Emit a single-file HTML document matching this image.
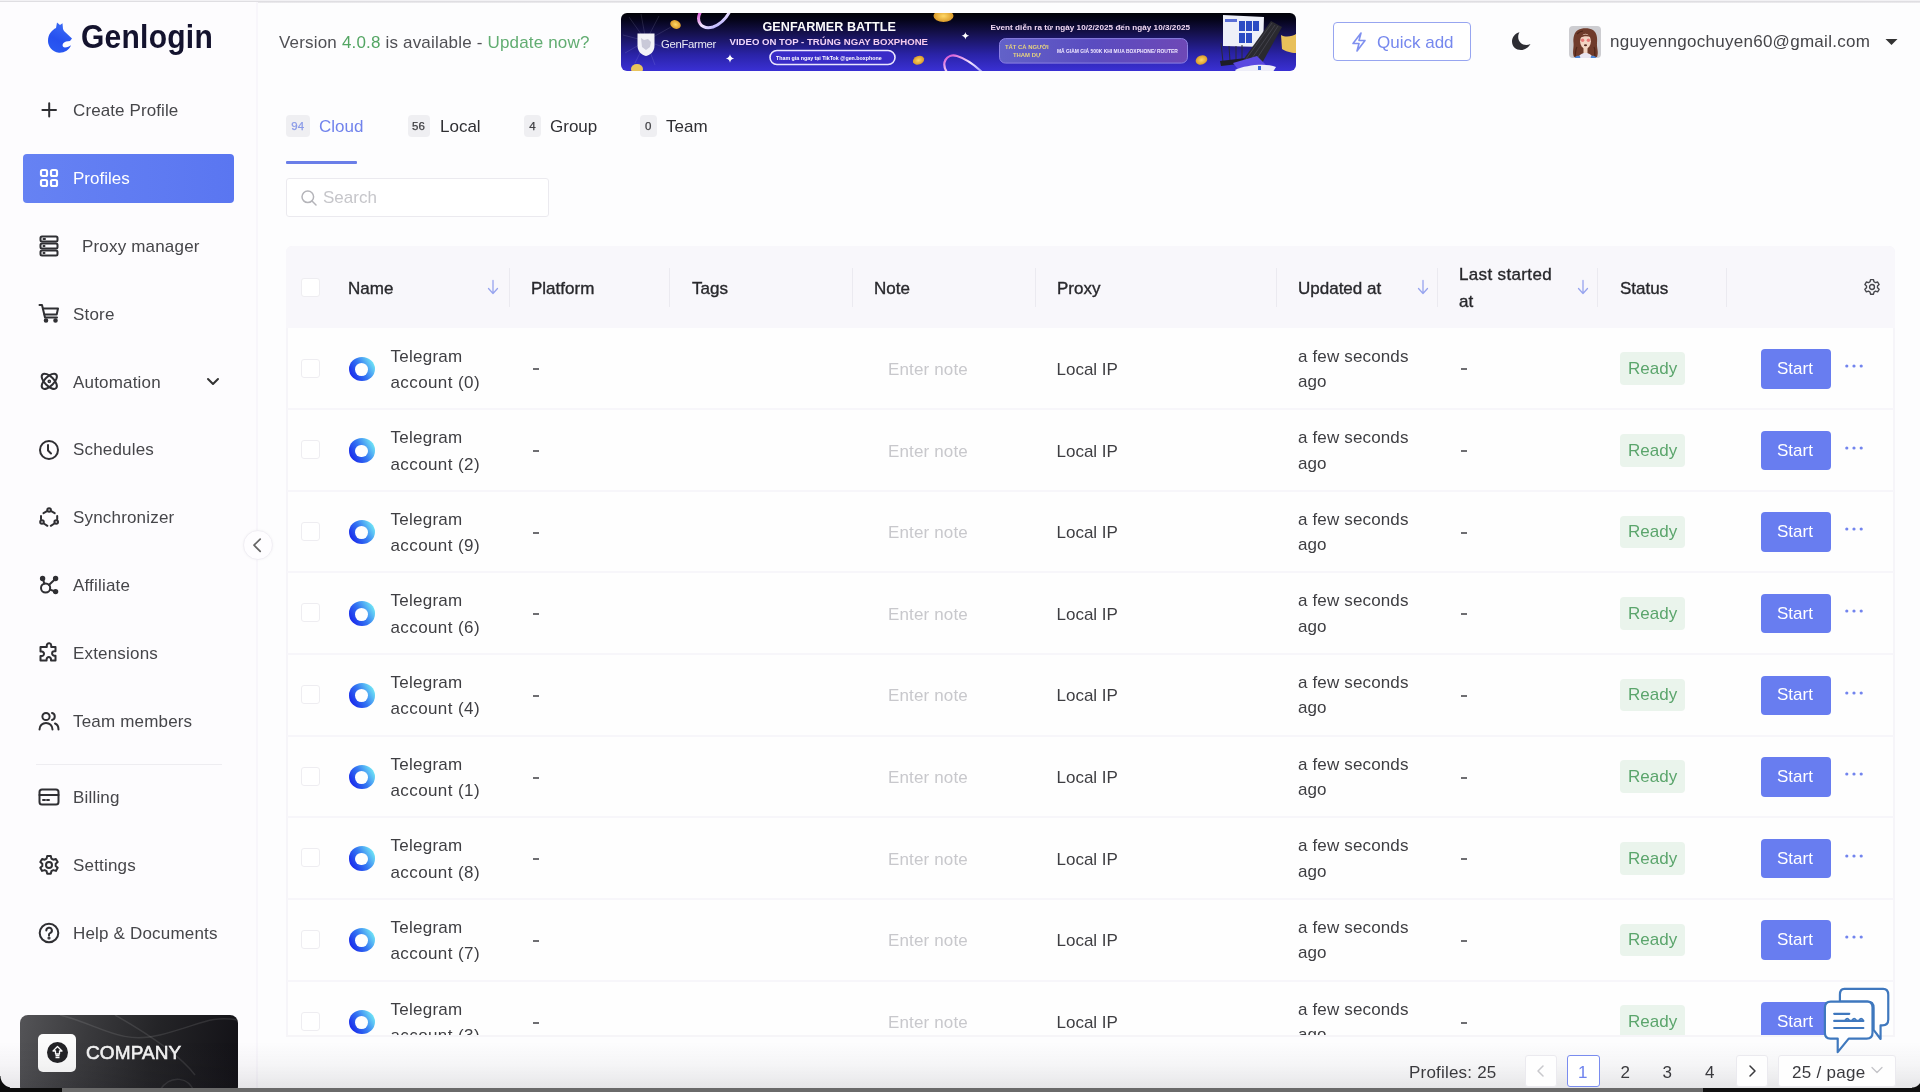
<!DOCTYPE html>
<html><head><meta charset="utf-8"><title>Genlogin</title>
<style>
html,body{margin:0;padding:0;}
body{width:1920px;height:1092px;position:relative;overflow:hidden;background:#fdfdfe;font-family:'Liberation Sans', sans-serif;}
.t{position:absolute;white-space:nowrap;font-family:'Liberation Sans', sans-serif;}
svg text{font-family:"Liberation Sans",sans-serif;}
</style></head><body>
<div style="position:absolute;left:0;top:0;width:1920px;height:1092px;overflow:hidden;will-change:transform">
<div style="position:absolute;left:0;top:0;width:1920px;height:3px;background:linear-gradient(180deg,#f2f1f4 0,#f2f1f4 0.8px,#dfdee2 1.2px,#dfdee2 2.2px,#fbfafc 3px)"></div><div style="position:absolute;left:0;top:2px;width:256px;height:1090px;background:#fdfcfe;border-right:2px solid #f8f6fb"></div><svg style="position:absolute;left:46px;top:21px" width="28" height="33" viewBox="0 0 28 33">
<defs><linearGradient id="fox" x1="0.7" y1="0" x2="0.3" y2="1"><stop offset="0" stop-color="#3d6ef6"/><stop offset="0.6" stop-color="#2650ef"/><stop offset="1" stop-color="#2a5af2"/></linearGradient></defs>
<path fill="url(#fox)" d="M11 1.5 L14 4 L16.5 2.3 L17 8 L18 10 L26 17.5 L24 20 L20 20.5 C15.5 22 15.8 26.5 19 26.5 C21.5 26.5 23.5 25.5 25 24.3 C23.5 29 18 32 13 31.7 C6 31 2 25 2 20 C2 13 6 9 10 7 Z"/>
</svg><div class="t" style="left:81px;top:20.3px;font-size:30px;line-height:36.0px;color:#14132e;font-weight:700;transform:scaleY(1.1);transform-origin:0 80%;letter-spacing:0.25px">Genlogin</div><div style="position:absolute;left:39px;top:100px;line-height:0"><svg width="20" height="20" viewBox="0 0 20 20" fill="none" stroke="#2f2f33" stroke-width="2" stroke-linecap="round" stroke-linejoin="round"><path d="M10.2 3.3v13.1M3.4 9.9h13.6"/></svg></div><div class="t" style="left:73px;top:101.21px;font-size:17px;line-height:20.4px;color:#46464a;font-weight:400;letter-spacing:0.1px">Create Profile</div><div style="position:absolute;left:23px;top:153.5px;width:211px;height:49px;border-radius:4px;background:linear-gradient(90deg,#6682f3,#5a76f1)"></div><div style="position:absolute;left:39px;top:168px;line-height:0"><svg width="20" height="20" viewBox="0 0 20 20" fill="none" stroke="#fff" stroke-width="2.2"><rect x="2" y="2" width="6" height="6" rx="1.5"/><rect x="12" y="2" width="6" height="6" rx="1.5"/><rect x="2" y="12" width="6" height="6" rx="1.5"/><rect x="12" y="12" width="6" height="6" rx="1.5"/></svg></div><div class="t" style="left:73px;top:168.91px;font-size:17px;line-height:20.4px;color:#ffffff;font-weight:400;">Profiles</div><div style="position:absolute;left:39px;top:235px;line-height:0"><svg width="20" height="22" viewBox="0 0 20 22" fill="none" stroke="#2f2f33" stroke-width="2" stroke-linecap="round" stroke-linejoin="round"><rect x="1.5" y="1.5" width="17" height="5" rx="1.5"/><rect x="1.5" y="8.5" width="17" height="5" rx="1.5"/><rect x="1.5" y="15.5" width="17" height="5" rx="1.5"/><path d="M4.5 4h1.5M4.5 11h1M4.5 18h1"/></svg></div><div class="t" style="left:82px;top:237.21px;font-size:17px;line-height:20.4px;color:#46464a;font-weight:400;letter-spacing:0.18px">Proxy manager</div><div style="position:absolute;left:38px;top:303px;line-height:0"><svg width="22" height="20" viewBox="0 0 22 20" fill="none" stroke="#2f2f33" stroke-width="2" stroke-linecap="round" stroke-linejoin="round"><path d="M1.5 2h2.5l3 12.5h12"/><path d="M5 5.5h15l-1.3 6H6.5"/><circle cx="8" cy="17.5" r="1.3" fill="#2f2f33"/><circle cx="17.5" cy="17.5" r="1.3" fill="#2f2f33"/></svg></div><div class="t" style="left:73px;top:304.91px;font-size:17px;line-height:20.4px;color:#46464a;font-weight:400;letter-spacing:0.18px">Store</div><div style="position:absolute;left:39px;top:371px;line-height:0"><svg width="20" height="20" viewBox="0 0 20 20" fill="none" stroke="#2f2f33" stroke-width="2" stroke-linecap="round" stroke-linejoin="round"><ellipse cx="10.3" cy="10.3" rx="9.7" ry="4.6" transform="rotate(45 10.3 10.3)"/><ellipse cx="10.3" cy="10.3" rx="9.7" ry="4.6" transform="rotate(-45 10.3 10.3)"/><circle cx="10.3" cy="10.3" r="1.1" stroke-width="1.5"/></svg></div><div class="t" style="left:73px;top:372.51px;font-size:17px;line-height:20.4px;color:#46464a;font-weight:400;letter-spacing:0.18px">Automation</div><div style="position:absolute;left:38px;top:438.5px;line-height:0"><svg width="22" height="22" viewBox="0 0 22 22" fill="none" stroke="#2f2f33" stroke-width="2" stroke-linecap="round" stroke-linejoin="round"><circle cx="11" cy="11" r="9"/><path d="M10 6v5.5l3 3"/></svg></div><div class="t" style="left:73px;top:440.41px;font-size:17px;line-height:20.4px;color:#46464a;font-weight:400;letter-spacing:0.18px">Schedules</div><div style="position:absolute;left:38px;top:506px;line-height:0"><svg width="22" height="22" viewBox="0 0 22 22" fill="none" stroke="#2f2f33" stroke-width="2" stroke-linecap="round" stroke-linejoin="round"><circle cx="11.1" cy="4" r="1.8"/><circle cx="4" cy="16" r="1.8"/><circle cx="18.2" cy="16" r="1.8"/><path d="M9 5.2L5.5 7.2M13.2 5.2L16.7 7.2M3 10v3.2M19.2 10v3.2M5.8 17.5l3.6 2.3M16.4 17.5l-3.6 2.3"/></svg></div><div class="t" style="left:73px;top:508.41px;font-size:17px;line-height:20.4px;color:#46464a;font-weight:400;letter-spacing:0.18px">Synchronizer</div><div style="position:absolute;left:38px;top:574px;line-height:0"><svg width="22" height="22" viewBox="0 0 22 22" fill="none" stroke="#2f2f33" stroke-width="2" stroke-linecap="round" stroke-linejoin="round"><circle cx="7.6" cy="14" r="4.6"/><circle cx="4.6" cy="4.5" r="1.7" fill="#2f2f33"/><circle cx="17.6" cy="4.5" r="1.7" fill="#2f2f33"/><circle cx="17.6" cy="17.6" r="1.7" fill="#2f2f33"/><path d="M5.3 6.3L6.3 9.5M16.2 5.9L10.9 10.9M12 15.6L15.9 17"/></svg></div><div class="t" style="left:73px;top:576.41px;font-size:17px;line-height:20.4px;color:#46464a;font-weight:400;letter-spacing:0.18px">Affiliate</div><div style="position:absolute;left:38px;top:642px;line-height:0"><svg width="22" height="22" viewBox="0 0 22 22" fill="none" stroke="#2f2f33" stroke-width="2" stroke-linecap="round" stroke-linejoin="round"><path d="M9 2.5a2.2 2.2 0 0 1 4.2 .8V5h4.3v4.3h-1.2a2.2 2.2 0 1 0 0 4.4h1.2v4.8H13v-1.2a2.2 2.2 0 1 0-4.4 0v1.2H2.5V14h1.3a2.2 2.2 0 1 0 0-4.4H2.5V5h6.3V3.3z"/></svg></div><div class="t" style="left:73px;top:644.41px;font-size:17px;line-height:20.4px;color:#46464a;font-weight:400;letter-spacing:0.18px">Extensions</div><div style="position:absolute;left:38px;top:710px;line-height:0"><svg width="22" height="22" viewBox="0 0 22 22" fill="none" stroke="#2f2f33" stroke-width="2" stroke-linecap="round" stroke-linejoin="round"><circle cx="8" cy="6.5" r="3.6"/><path d="M1.5 19.5c0-3.8 2.9-6.5 6.5-6.5s6.5 2.7 6.5 6.5"/><path d="M14 3a3.6 3.6 0 0 1 0 7"/><path d="M17 13.5c2.2.9 3.5 3 3.5 6"/></svg></div><div class="t" style="left:73px;top:711.91px;font-size:17px;line-height:20.4px;color:#46464a;font-weight:400;letter-spacing:0.18px">Team members</div><div style="position:absolute;left:38px;top:787px;line-height:0"><svg width="22" height="20" viewBox="0 0 22 20" fill="none" stroke="#2f2f33" stroke-width="2" stroke-linecap="round" stroke-linejoin="round"><rect x="1.5" y="2.5" width="19" height="15" rx="2.5"/><path d="M1.5 8h19M5 13h2M9 13h2"/></svg></div><div class="t" style="left:73px;top:788.41px;font-size:17px;line-height:20.4px;color:#46464a;font-weight:400;letter-spacing:0.18px">Billing</div><div style="position:absolute;left:38px;top:854px;line-height:0"><svg width="22" height="22" viewBox="0 0 22 22" fill="none" stroke="#2f2f33" stroke-width="2" stroke-linecap="round" stroke-linejoin="round"><path d="M9.2 2h3.6l.6 2.6 1.9 1.1 2.6-.8 1.8 3.1-2 1.8v2.2l2 1.8-1.8 3.1-2.6-.8-1.9 1.1-.6 2.6H9.2l-.6-2.6-1.9-1.1-2.6.8-1.8-3.1 2-1.8V9.8l-2-1.8 1.8-3.1 2.6.8 1.9-1.1z"/><circle cx="11" cy="11" r="3"/></svg></div><div class="t" style="left:73px;top:856.41px;font-size:17px;line-height:20.4px;color:#46464a;font-weight:400;letter-spacing:0.18px">Settings</div><div style="position:absolute;left:38px;top:922px;line-height:0"><svg width="22" height="22" viewBox="0 0 22 22" fill="none" stroke="#2f2f33" stroke-width="2" stroke-linecap="round" stroke-linejoin="round"><circle cx="11" cy="11" r="9.3"/><path d="M8.3 8.5a2.8 2.8 0 1 1 3.8 2.6c-.7.3-1.1.9-1.1 1.6v.8"/><circle cx="11" cy="16" r=".6" fill="#2f2f33"/></svg></div><div class="t" style="left:73px;top:924.21px;font-size:17px;line-height:20.4px;color:#46464a;font-weight:400;letter-spacing:0.18px">Help &amp; Documents</div><svg style="position:absolute;left:205px;top:375px" width="16" height="14" viewBox="0 0 16 14" fill="none" stroke="#333" stroke-width="2" stroke-linecap="round" stroke-linejoin="round"><path d="M3 4l5 5 5-5"/></svg><div style="position:absolute;left:36px;top:764px;width:186px;height:1px;background:#eeedf1"></div><div style="position:absolute;left:242.5px;top:529.7px;width:30px;height:30px;box-sizing:border-box;border-radius:50%;background:#fefdff;border:1.5px solid #f0eef4;box-shadow:0 0 3px rgba(0,0,0,0.04)"></div><svg style="position:absolute;left:250px;top:538px" width="14" height="15" viewBox="0 0 14 15" fill="none" stroke="#666" stroke-width="1.7" stroke-linecap="round" stroke-linejoin="round"><path d="M10.2 1.2L4 7.2 10.2 13.4"/></svg><div style="position:absolute;left:20px;top:1015px;width:218px;height:80px;border-radius:8px;background:linear-gradient(100deg,#545457 0%,#3a3a3d 30%,#242427 60%,#121116 100%);overflow:hidden">
<svg width="218" height="80" style="position:absolute;left:0;top:0" fill="none" stroke="rgba(255,255,255,0.10)" stroke-width="1.5"><path d="M40 0 C80 10 100 30 140 20 S190 0 218 5"/><path d="M95 0 C130 20 160 40 175 60"/><path d="M140 75 C150 60 170 60 175 80"/></svg>
</div><div style="position:absolute;left:38px;top:1033.5px;width:38px;height:38px;border-radius:5px;background:#fbfbfb"></div><div style="position:absolute;left:46.5px;top:1042px;width:21px;height:21px;border-radius:50%;background:#232326"></div><svg style="position:absolute;left:46.5px;top:1042px" width="21" height="21" viewBox="0 0 21 21" fill="none" stroke="#fff" stroke-width="1.3" stroke-linejoin="round"><path d="M10.5 4.5 L15 9 H12.5 V12 H8.5 V9 H6 Z"/><path d="M8.5 13.5h4M8.5 15.5h4"/></svg><div class="t" style="left:86px;top:1042.22px;font-size:19px;line-height:22.8px;color:#f4f4f4;font-weight:400;-webkit-text-stroke:0.6px #f4f4f4;letter-spacing:0.1px">COMPANY</div><div class="t" style="left:279px;top:32.71px;font-size:17px;line-height:20.4px;color:#505055;font-weight:400;letter-spacing:0.18px">Version <span style="color:#53a563">4.0.8</span> is available - <span style="color:#62ad72">Update now?</span></div><div style="position:absolute;left:620.5px;top:12.5px;width:675px;height:58.5px;border-radius:6px;overflow:hidden;background:linear-gradient(180deg,#020207 0%,#05041a 12%,#15114e 35%,#2a23a8 72%,#3a30d4 100%)">
<svg width="675" height="59" viewBox="0 0 675 59" style="position:absolute;left:0;top:0">
 <defs><linearGradient id="ring" x1="0" x2="1" y1="0" y2="1"><stop offset="0" stop-color="#d64bd0"/><stop offset="0.5" stop-color="#f4e6ff"/><stop offset="1" stop-color="#8a8cff"/></linearGradient>
 <linearGradient id="pill" x1="0" x2="1"><stop offset="0" stop-color="#6262c8"/><stop offset="0.5" stop-color="#5a4cc0"/><stop offset="1" stop-color="#6e48b6"/></linearGradient>
 <linearGradient id="txt2" x1="0" x2="1"><stop offset="0" stop-color="#f0d8ff"/><stop offset="1" stop-color="#f4c8ea"/></linearGradient>
 <radialGradient id="coin"><stop offset="0" stop-color="#ffd866"/><stop offset="1" stop-color="#d99a2a"/></radialGradient></defs>
 <g stroke="rgba(220,220,255,0.22)" stroke-width="0.6">
  <path d="M25 28 L8 4M25 28 L20 1M25 28 L38 3M25 28 L50 14M25 28 L2 22M25 28 L4 40M25 28 L48 36M25 28 L14 50M25 28 L34 52"/>
 </g>
 <ellipse cx="54.5" cy="11.5" rx="5.5" ry="4.2" fill="url(#coin)" transform="rotate(25 54.5 11.5)"/>
 <path d="M80 -2 C74 8 80 17 92 14 C100 11 106 4 109 -2" fill="none" stroke="url(#ring)" stroke-width="3"/>
 <path d="M16.5 20.5 h17 v12 c0 6 -4 9.5 -8.5 10.5 c-4.5 -1 -8.5 -4.5 -8.5 -10.5z" fill="#f3f3f8"/>
 <path d="M20 25 l3 2 l4 -1 l3 3 l-1 5 l-4 3 l-4 -3z" fill="#c9c9d8"/>
 <text x="40" y="35" font-size="11.3" letter-spacing="-0.3" fill="#e8e8f4">GenFarmer</text>
 <ellipse cx="16" cy="56" rx="6" ry="5" fill="#e9c45c"/>
 <text x="141.5" y="18" font-weight="700" font-size="12.6" letter-spacing="0.05" fill="#fafafa">GENFARMER BATTLE</text>
 <text x="108.5" y="32" font-weight="700" font-size="9.6" letter-spacing="0" fill="url(#txt2)">VIDEO ON TOP - TRÚNG NGAY BOXPHONE</text>
 <rect x="149" y="37.5" width="125" height="14" rx="7" fill="#3a2cc8" stroke="#ebe6ff" stroke-width="1.6"/>
 <text x="155" y="47.3" font-weight="700" font-size="5.3" fill="#ffffff">Tham gia ngay tại TikTok @gen.boxphone</text>
 <path d="M109 41.3 Q109.63 44.87 113.2 45.5 Q109.63 46.13 109 49.7 Q108.37 46.13 104.8 45.5 Q108.37 44.87 109 41.3Z" fill="#fff"/>
 <ellipse cx="322.5" cy="3" rx="10" ry="6" fill="url(#coin)"/>
 <ellipse cx="297.5" cy="47.3" rx="5.8" ry="4.2" fill="url(#coin)" transform="rotate(-20 297.5 47.3)"/>
 <path d="M344.4 18.9 Q344.96999999999997 22.13 348.2 22.7 Q344.96999999999997 23.27 344.4 26.5 Q343.83 23.27 340.59999999999997 22.7 Q343.83 22.13 344.4 18.9Z" fill="#fff"/>
 <path d="M328 62 C318 50 326 40 336 43 C346 46 356 54 364 62" fill="none" stroke="url(#ring)" stroke-width="2.2"/>
 <text x="369.5" y="17.2" font-weight="700" font-size="8.1" letter-spacing="0.05" fill="#f0d8f2">Event diễn ra từ ngày 10/2/2025 đến ngày 10/3/2025</text>
 <rect x="378.5" y="25.6" width="188" height="24.5" rx="6" fill="url(#pill)" stroke="#8c80e2" stroke-width="1"/>
 <text x="384" y="36" font-weight="700" font-size="5.9" fill="#e8d57e">TẤT CẢ NGƯỜI</text>
 <text x="392" y="43.5" font-weight="700" font-size="5.9" fill="#e8d57e">THAM DỰ</text>
 <text x="436" y="40" font-weight="700" font-size="4.95" fill="#f0e8ff">MÃ GIẢM GIÁ 500K KHI MUA BOXPHONE/ ROUTER</text>
 <ellipse cx="580.5" cy="47" rx="6" ry="4.5" fill="url(#coin)" transform="rotate(-20 580.5 47)"/>
 <path d="M602 2 L643 4 L642 34 L602 33 Z" fill="#eef0f8"/>
 <rect x="604" y="6" width="12" height="3" fill="#5b6fd6"/>
 <g fill="#2c4cc4"><rect x="618" y="8" width="6" height="10"/><rect x="625" y="8" width="6" height="10"/><rect x="632" y="8" width="6" height="10"/><rect x="618" y="20" width="6" height="10"/><rect x="625" y="20" width="6" height="10"/></g>
 <path d="M600 30 L602 49 M608 33 L609 48 M615 33 L615 47 M621 32 L621 46" stroke="#2a2a36" stroke-width="1"/>
 <path d="M599 48 L625 45 L626 50 L600 53 Z" fill="#1d1d26"/>
 <path d="M622 47 L650 8 L661 14 L640 52 Z" fill="#2a2a2f"/>
 <path d="M625 46 L651 10M629 48 L654 12M633 50 L657 13" stroke="#5a5a66" stroke-width="0.5"/>
 <path d="M612 50 L636 43 L645 52 L620 60 Z" fill="#5a48e0"/>
 <path d="M614 57 C625 52 645 50 655 54 L650 62 L618 62 Z" fill="#eeeef8"/>
 <rect x="637" y="53" width="3" height="4" fill="#3a66d8"/>
 <path d="M660 22 C665 25 672 23 675 21 L675 40 C670 40 664 38 661 36 Z" fill="#e8c05a"/>
</svg></div><div style="position:absolute;left:1332.5px;top:21.5px;width:136px;height:37px;border:1.5px solid #97a5f0;border-radius:4px;background:#fff"></div><svg style="position:absolute;left:1350px;top:31px" width="18" height="22" viewBox="0 0 18 22" fill="none" stroke="#7f90ef" stroke-width="1.6" stroke-linejoin="round"><path d="M11 2 L3 12.5 H9 L7 20 L15 9.5 H9 Z"/></svg><div class="t" style="left:1377px;top:32.71px;font-size:17px;line-height:20.4px;color:#7688ee;font-weight:400;">Quick add</div><svg style="position:absolute;left:1509.5px;top:29.5px" width="24" height="22" viewBox="0 0 24 22"><path fill="#2d2d33" d="M9.5 2.2 C5 3.2 2 7.2 2 11.5 C2 16.5 6 20 11 20 C15 20 18.3 17.5 20.5 14 C19 14.7 17.8 15 16.3 15 C11.8 15 8.2 11.5 8.2 7 C8.2 5.2 8.6 3.5 9.5 2.2 Z"/></svg><div style="position:absolute;left:1568.5px;top:25.5px;width:32.5px;height:32.5px;border-radius:4px;background:#cdcdd1;overflow:hidden">
<svg width="33" height="33" viewBox="0 0 33 33">
<path d="M5 31 C3 26 5 22 4.5 17 C4 12 5 6 9 4 C13 1.5 20 1.5 24 4 C28 7 28.5 12 28 17 C27.5 22 30 26 28 31 Z" fill="#6f3b2b"/>
<path d="M6 30 C7 27 6 24 8 21 M26 30 C25 27 27 24 25 21 M8 8 C10 6 12 5 14 5" stroke="#4e2619" stroke-width="1.2" fill="none"/>
<path d="M14.5 22 h4 v6 h-4z" fill="#f1d3c2"/>
<path d="M9 33 C9.5 29 13 27 16.5 27 C20 27 23.5 29 24 33z" fill="#e9e6f2"/>
<path d="M5 33 C6 30 9 29.5 11 30 L11.5 33z M28 33 C27 30 24 29.5 22 30 L21.5 33z" fill="#4f87d6"/>
<ellipse cx="16.5" cy="15.2" rx="5.4" ry="7.4" fill="#f3d4c3"/>
<path d="M11 11 C12 7.5 21 7.5 22 11 C19 9.8 14 9.8 11 12z" fill="#6f3b2b"/>
<circle cx="13.6" cy="14.2" r="1.7" fill="#e97a78"/><circle cx="19.4" cy="14.2" r="1.7" fill="#e97a78"/>
<ellipse cx="16.5" cy="19.2" rx="1.6" ry="1" fill="#5a3026"/>
</svg></div><div class="t" style="left:1610px;top:32.41px;font-size:17px;line-height:20.4px;color:#454549;font-weight:400;letter-spacing:0.28px">nguyenngochuyen60@gmail.com</div><svg style="position:absolute;left:1885px;top:38px" width="13" height="8" viewBox="0 0 13 8"><path d="M0.5 1 H12.5 L6.5 7 Z" fill="#333"/></svg><div style="position:absolute;left:286px;top:114.5px;width:23.5px;height:22px;border-radius:4px;background:#efeff2;color:#8b9be8;font-family:'Liberation Sans', sans-serif;font-size:11.5px;line-height:22px;text-align:center;-webkit-text-stroke:0.25px #8b9be8">94</div><div class="t" style="left:319px;top:116.61px;font-size:17px;line-height:20.4px;color:#7183ec;font-weight:400;">Cloud</div><div style="position:absolute;left:407.5px;top:114.5px;width:22px;height:22px;border-radius:4px;background:#efeff2;color:#404044;font-family:'Liberation Sans', sans-serif;font-size:11.5px;line-height:22px;text-align:center;-webkit-text-stroke:0.25px #404044">56</div><div class="t" style="left:440px;top:116.61px;font-size:17px;line-height:20.4px;color:#2f2f33;font-weight:400;">Local</div><div style="position:absolute;left:524px;top:114.5px;width:17px;height:22px;border-radius:4px;background:#efeff2;color:#404044;font-family:'Liberation Sans', sans-serif;font-size:11.5px;line-height:22px;text-align:center;-webkit-text-stroke:0.25px #404044">4</div><div class="t" style="left:550px;top:116.61px;font-size:17px;line-height:20.4px;color:#2f2f33;font-weight:400;">Group</div><div style="position:absolute;left:640px;top:114.5px;width:16.5px;height:22px;border-radius:4px;background:#efeff2;color:#404044;font-family:'Liberation Sans', sans-serif;font-size:11.5px;line-height:22px;text-align:center;-webkit-text-stroke:0.25px #404044">0</div><div class="t" style="left:666px;top:116.61px;font-size:17px;line-height:20.4px;color:#2f2f33;font-weight:400;">Team</div><div style="position:absolute;left:286px;top:160.5px;width:71px;height:3px;border-radius:1px;background:#6a7ee8"></div><div style="position:absolute;left:286px;top:178px;width:261px;height:37px;border:1px solid #ebeaef;border-radius:3px;background:#fff"></div><svg style="position:absolute;left:300px;top:189px" width="18" height="18" viewBox="0 0 18 18" fill="none" stroke="#b4b4b9" stroke-width="1.5" stroke-linecap="round"><circle cx="7.8" cy="7.8" r="5.8"/><path d="M12 12l4 4"/></svg><div class="t" style="left:323px;top:188.41px;font-size:17px;line-height:20.4px;color:#c6c6ca;font-weight:400;">Search</div><div style="position:absolute;left:286px;top:246px;width:1609px;height:791px;background:#fefefe;border:2px solid #f6f5f9;border-bottom:none;border-radius:6px 6px 0 0;box-sizing:border-box"></div><div style="position:absolute;left:286px;top:246px;width:1609px;height:81.5px;background:#f8f7fb;border-radius:6px 6px 0 0"></div><div style="position:absolute;left:301px;top:278px;width:17px;height:17px;border:1px solid #eeedf1;border-radius:3px;background:#fff"></div><div class="t" style="left:348px;top:278.51px;font-size:17px;line-height:20.4px;color:#28282c;font-weight:400;-webkit-text-stroke:0.35px #28282c">Name</div><div class="t" style="left:531px;top:278.51px;font-size:17px;line-height:20.4px;color:#28282c;font-weight:400;-webkit-text-stroke:0.35px #28282c">Platform</div><div class="t" style="left:692px;top:278.51px;font-size:17px;line-height:20.4px;color:#28282c;font-weight:400;-webkit-text-stroke:0.35px #28282c">Tags</div><div class="t" style="left:874px;top:278.51px;font-size:17px;line-height:20.4px;color:#28282c;font-weight:400;-webkit-text-stroke:0.35px #28282c">Note</div><div class="t" style="left:1057px;top:278.51px;font-size:17px;line-height:20.4px;color:#28282c;font-weight:400;-webkit-text-stroke:0.35px #28282c">Proxy</div><div class="t" style="left:1298px;top:278.51px;font-size:17px;line-height:20.4px;color:#28282c;font-weight:400;-webkit-text-stroke:0.35px #28282c">Updated at</div><div class="t" style="left:1459px;top:265.41px;font-size:17px;line-height:20.4px;color:#28282c;font-weight:400;-webkit-text-stroke:0.35px #28282c;letter-spacing:0.35px">Last started</div><div class="t" style="left:1459px;top:291.91px;font-size:17px;line-height:20.4px;color:#28282c;font-weight:400;-webkit-text-stroke:0.35px #28282c">at</div><div class="t" style="left:1620px;top:278.51px;font-size:17px;line-height:20.4px;color:#28282c;font-weight:400;-webkit-text-stroke:0.35px #28282c">Status</div><div style="position:absolute;left:508.5px;top:268px;width:1px;height:39px;background:#ebeaf0"></div><div style="position:absolute;left:669px;top:268px;width:1px;height:39px;background:#ebeaf0"></div><div style="position:absolute;left:851.5px;top:268px;width:1px;height:39px;background:#ebeaf0"></div><div style="position:absolute;left:1035px;top:268px;width:1px;height:39px;background:#ebeaf0"></div><div style="position:absolute;left:1276px;top:268px;width:1px;height:39px;background:#ebeaf0"></div><div style="position:absolute;left:1436.5px;top:268px;width:1px;height:39px;background:#ebeaf0"></div><div style="position:absolute;left:1597px;top:268px;width:1px;height:39px;background:#ebeaf0"></div><div style="position:absolute;left:1726px;top:268px;width:1px;height:39px;background:#ebeaf0"></div><svg style="position:absolute;left:486px;top:279px" width="14" height="16" viewBox="0 0 14 16" fill="none" stroke="#97a4ef" stroke-width="1.3" stroke-linecap="round" stroke-linejoin="round"><path d="M7 1.5v13M2.5 9.5l4.5 5 4.5-5"/></svg><svg style="position:absolute;left:1415.5px;top:279px" width="14" height="16" viewBox="0 0 14 16" fill="none" stroke="#97a4ef" stroke-width="1.3" stroke-linecap="round" stroke-linejoin="round"><path d="M7 1.5v13M2.5 9.5l4.5 5 4.5-5"/></svg><svg style="position:absolute;left:1576px;top:279px" width="14" height="16" viewBox="0 0 14 16" fill="none" stroke="#97a4ef" stroke-width="1.3" stroke-linecap="round" stroke-linejoin="round"><path d="M7 1.5v13M2.5 9.5l4.5 5 4.5-5"/></svg><svg style="position:absolute;left:1863px;top:278px" width="18" height="18" viewBox="0 0 22 22" fill="none" stroke="#46464b" stroke-width="1.7" stroke-linejoin="round"><path d="M9.2 2h3.6l.6 2.6 1.9 1.1 2.6-.8 1.8 3.1-2 1.8v2.2l2 1.8-1.8 3.1-2.6-.8-1.9 1.1-.6 2.6H9.2l-.6-2.6-1.9-1.1-2.6.8-1.8-3.1 2-1.8V9.8l-2-1.8 1.8-3.1 2.6.8 1.9-1.1z"/><circle cx="11" cy="11" r="3"/></svg><div style="position:absolute;left:0;top:0;width:1920px;height:1035px;overflow:hidden"><div style="position:absolute;left:301px;top:358.5px;width:17px;height:17px;border:1px solid #eeedf1;border-radius:3px;background:#fff"></div><div style="position:absolute;left:348.5px;top:356.50px;width:26.5px;height:24.5px;border-radius:50%;background:linear-gradient(60deg,#1b2fec 15%,#3578f2 50%,#72eaf6 90%)"></div><div style="position:absolute;left:354.9px;top:362.90px;width:13px;height:12.8px;border-radius:50%;background:#fefefe"></div><div class="t" style="left:390.5px;top:346.61px;font-size:17px;line-height:20.4px;color:#3e3e42;font-weight:400;letter-spacing:0.25px">Telegram</div><div class="t" style="left:390.5px;top:372.91px;font-size:17px;line-height:20.4px;color:#3e3e42;font-weight:400;letter-spacing:0.4px">account (0)</div><div style="position:absolute;left:533px;top:368px;width:6px;height:1.6px;background:#6e6e72"></div><div class="t" style="left:888px;top:359.91px;font-size:17px;line-height:20.4px;color:#c8c8cc;font-weight:400;letter-spacing:0.15px">Enter note</div><div class="t" style="left:1056.5px;top:359.91px;font-size:17px;line-height:20.4px;color:#3e3e42;font-weight:400;">Local IP</div><div class="t" style="left:1298px;top:346.61px;font-size:17px;line-height:20.4px;color:#3e3e42;font-weight:400;letter-spacing:0.15px">a few seconds</div><div class="t" style="left:1298px;top:371.91px;font-size:17px;line-height:20.4px;color:#3e3e42;font-weight:400;">ago</div><div style="position:absolute;left:1461px;top:368px;width:6px;height:1.6px;background:#6e6e72"></div><div style="position:absolute;left:1620px;top:352.30px;width:65px;height:32.7px;border-radius:4px;background:#eaf4ec"></div><div class="t" style="left:1628px;top:358.91px;font-size:17px;line-height:20.4px;color:#5ba56c;font-weight:400;">Ready</div><div style="position:absolute;left:1761px;top:349.00px;width:70px;height:39.5px;border-radius:4px;background:#687df0"></div><div class="t" style="left:1777px;top:358.91px;font-size:17px;line-height:20.4px;color:#ffffff;font-weight:400;">Start</div><svg style="position:absolute;left:1844px;top:363.00px" width="20" height="6" viewBox="0 0 20 6" fill="#7284ee"><circle cx="2.8" cy="3" r="1.6"/><circle cx="10" cy="3" r="1.6"/><circle cx="17.2" cy="3" r="1.6"/></svg><div style="position:absolute;left:287px;top:408.12px;width:1607px;height:2px;background:#f7f6fa"></div><div style="position:absolute;left:301px;top:440.12px;width:17px;height:17px;border:1px solid #eeedf1;border-radius:3px;background:#fff"></div><div style="position:absolute;left:348.5px;top:438.12px;width:26.5px;height:24.5px;border-radius:50%;background:linear-gradient(60deg,#1b2fec 15%,#3578f2 50%,#72eaf6 90%)"></div><div style="position:absolute;left:354.9px;top:444.52px;width:13px;height:12.8px;border-radius:50%;background:#fefefe"></div><div class="t" style="left:390.5px;top:428.23px;font-size:17px;line-height:20.4px;color:#3e3e42;font-weight:400;letter-spacing:0.25px">Telegram</div><div class="t" style="left:390.5px;top:454.53px;font-size:17px;line-height:20.4px;color:#3e3e42;font-weight:400;letter-spacing:0.4px">account (2)</div><div style="position:absolute;left:533px;top:450px;width:6px;height:1.6px;background:#6e6e72"></div><div class="t" style="left:888px;top:441.53px;font-size:17px;line-height:20.4px;color:#c8c8cc;font-weight:400;letter-spacing:0.15px">Enter note</div><div class="t" style="left:1056.5px;top:441.53px;font-size:17px;line-height:20.4px;color:#3e3e42;font-weight:400;">Local IP</div><div class="t" style="left:1298px;top:428.23px;font-size:17px;line-height:20.4px;color:#3e3e42;font-weight:400;letter-spacing:0.15px">a few seconds</div><div class="t" style="left:1298px;top:453.53px;font-size:17px;line-height:20.4px;color:#3e3e42;font-weight:400;">ago</div><div style="position:absolute;left:1461px;top:450px;width:6px;height:1.6px;background:#6e6e72"></div><div style="position:absolute;left:1620px;top:433.93px;width:65px;height:32.7px;border-radius:4px;background:#eaf4ec"></div><div class="t" style="left:1628px;top:440.53px;font-size:17px;line-height:20.4px;color:#5ba56c;font-weight:400;">Ready</div><div style="position:absolute;left:1761px;top:430.62px;width:70px;height:39.5px;border-radius:4px;background:#687df0"></div><div class="t" style="left:1777px;top:440.53px;font-size:17px;line-height:20.4px;color:#ffffff;font-weight:400;">Start</div><svg style="position:absolute;left:1844px;top:444.62px" width="20" height="6" viewBox="0 0 20 6" fill="#7284ee"><circle cx="2.8" cy="3" r="1.6"/><circle cx="10" cy="3" r="1.6"/><circle cx="17.2" cy="3" r="1.6"/></svg><div style="position:absolute;left:287px;top:489.75px;width:1607px;height:2px;background:#f7f6fa"></div><div style="position:absolute;left:301px;top:521.75px;width:17px;height:17px;border:1px solid #eeedf1;border-radius:3px;background:#fff"></div><div style="position:absolute;left:348.5px;top:519.75px;width:26.5px;height:24.5px;border-radius:50%;background:linear-gradient(60deg,#1b2fec 15%,#3578f2 50%,#72eaf6 90%)"></div><div style="position:absolute;left:354.9px;top:526.15px;width:13px;height:12.8px;border-radius:50%;background:#fefefe"></div><div class="t" style="left:390.5px;top:509.86px;font-size:17px;line-height:20.4px;color:#3e3e42;font-weight:400;letter-spacing:0.25px">Telegram</div><div class="t" style="left:390.5px;top:536.16px;font-size:17px;line-height:20.4px;color:#3e3e42;font-weight:400;letter-spacing:0.4px">account (9)</div><div style="position:absolute;left:533px;top:532px;width:6px;height:1.6px;background:#6e6e72"></div><div class="t" style="left:888px;top:523.16px;font-size:17px;line-height:20.4px;color:#c8c8cc;font-weight:400;letter-spacing:0.15px">Enter note</div><div class="t" style="left:1056.5px;top:523.16px;font-size:17px;line-height:20.4px;color:#3e3e42;font-weight:400;">Local IP</div><div class="t" style="left:1298px;top:509.86px;font-size:17px;line-height:20.4px;color:#3e3e42;font-weight:400;letter-spacing:0.15px">a few seconds</div><div class="t" style="left:1298px;top:535.16px;font-size:17px;line-height:20.4px;color:#3e3e42;font-weight:400;">ago</div><div style="position:absolute;left:1461px;top:532px;width:6px;height:1.6px;background:#6e6e72"></div><div style="position:absolute;left:1620px;top:515.55px;width:65px;height:32.7px;border-radius:4px;background:#eaf4ec"></div><div class="t" style="left:1628px;top:522.16px;font-size:17px;line-height:20.4px;color:#5ba56c;font-weight:400;">Ready</div><div style="position:absolute;left:1761px;top:512.25px;width:70px;height:39.5px;border-radius:4px;background:#687df0"></div><div class="t" style="left:1777px;top:522.16px;font-size:17px;line-height:20.4px;color:#ffffff;font-weight:400;">Start</div><svg style="position:absolute;left:1844px;top:526.25px" width="20" height="6" viewBox="0 0 20 6" fill="#7284ee"><circle cx="2.8" cy="3" r="1.6"/><circle cx="10" cy="3" r="1.6"/><circle cx="17.2" cy="3" r="1.6"/></svg><div style="position:absolute;left:287px;top:571.38px;width:1607px;height:2px;background:#f7f6fa"></div><div style="position:absolute;left:301px;top:603.38px;width:17px;height:17px;border:1px solid #eeedf1;border-radius:3px;background:#fff"></div><div style="position:absolute;left:348.5px;top:601.38px;width:26.5px;height:24.5px;border-radius:50%;background:linear-gradient(60deg,#1b2fec 15%,#3578f2 50%,#72eaf6 90%)"></div><div style="position:absolute;left:354.9px;top:607.77px;width:13px;height:12.8px;border-radius:50%;background:#fefefe"></div><div class="t" style="left:390.5px;top:591.49px;font-size:17px;line-height:20.4px;color:#3e3e42;font-weight:400;letter-spacing:0.25px">Telegram</div><div class="t" style="left:390.5px;top:617.79px;font-size:17px;line-height:20.4px;color:#3e3e42;font-weight:400;letter-spacing:0.4px">account (6)</div><div style="position:absolute;left:533px;top:613px;width:6px;height:1.6px;background:#6e6e72"></div><div class="t" style="left:888px;top:604.79px;font-size:17px;line-height:20.4px;color:#c8c8cc;font-weight:400;letter-spacing:0.15px">Enter note</div><div class="t" style="left:1056.5px;top:604.79px;font-size:17px;line-height:20.4px;color:#3e3e42;font-weight:400;">Local IP</div><div class="t" style="left:1298px;top:591.49px;font-size:17px;line-height:20.4px;color:#3e3e42;font-weight:400;letter-spacing:0.15px">a few seconds</div><div class="t" style="left:1298px;top:616.79px;font-size:17px;line-height:20.4px;color:#3e3e42;font-weight:400;">ago</div><div style="position:absolute;left:1461px;top:613px;width:6px;height:1.6px;background:#6e6e72"></div><div style="position:absolute;left:1620px;top:597.17px;width:65px;height:32.7px;border-radius:4px;background:#eaf4ec"></div><div class="t" style="left:1628px;top:603.79px;font-size:17px;line-height:20.4px;color:#5ba56c;font-weight:400;">Ready</div><div style="position:absolute;left:1761px;top:593.88px;width:70px;height:39.5px;border-radius:4px;background:#687df0"></div><div class="t" style="left:1777px;top:603.79px;font-size:17px;line-height:20.4px;color:#ffffff;font-weight:400;">Start</div><svg style="position:absolute;left:1844px;top:607.88px" width="20" height="6" viewBox="0 0 20 6" fill="#7284ee"><circle cx="2.8" cy="3" r="1.6"/><circle cx="10" cy="3" r="1.6"/><circle cx="17.2" cy="3" r="1.6"/></svg><div style="position:absolute;left:287px;top:653.00px;width:1607px;height:2px;background:#f7f6fa"></div><div style="position:absolute;left:301px;top:685.0px;width:17px;height:17px;border:1px solid #eeedf1;border-radius:3px;background:#fff"></div><div style="position:absolute;left:348.5px;top:683.00px;width:26.5px;height:24.5px;border-radius:50%;background:linear-gradient(60deg,#1b2fec 15%,#3578f2 50%,#72eaf6 90%)"></div><div style="position:absolute;left:354.9px;top:689.40px;width:13px;height:12.8px;border-radius:50%;background:#fefefe"></div><div class="t" style="left:390.5px;top:673.11px;font-size:17px;line-height:20.4px;color:#3e3e42;font-weight:400;letter-spacing:0.25px">Telegram</div><div class="t" style="left:390.5px;top:699.41px;font-size:17px;line-height:20.4px;color:#3e3e42;font-weight:400;letter-spacing:0.4px">account (4)</div><div style="position:absolute;left:533px;top:695px;width:6px;height:1.6px;background:#6e6e72"></div><div class="t" style="left:888px;top:686.41px;font-size:17px;line-height:20.4px;color:#c8c8cc;font-weight:400;letter-spacing:0.15px">Enter note</div><div class="t" style="left:1056.5px;top:686.41px;font-size:17px;line-height:20.4px;color:#3e3e42;font-weight:400;">Local IP</div><div class="t" style="left:1298px;top:673.11px;font-size:17px;line-height:20.4px;color:#3e3e42;font-weight:400;letter-spacing:0.15px">a few seconds</div><div class="t" style="left:1298px;top:698.41px;font-size:17px;line-height:20.4px;color:#3e3e42;font-weight:400;">ago</div><div style="position:absolute;left:1461px;top:695px;width:6px;height:1.6px;background:#6e6e72"></div><div style="position:absolute;left:1620px;top:678.80px;width:65px;height:32.7px;border-radius:4px;background:#eaf4ec"></div><div class="t" style="left:1628px;top:685.41px;font-size:17px;line-height:20.4px;color:#5ba56c;font-weight:400;">Ready</div><div style="position:absolute;left:1761px;top:675.50px;width:70px;height:39.5px;border-radius:4px;background:#687df0"></div><div class="t" style="left:1777px;top:685.41px;font-size:17px;line-height:20.4px;color:#ffffff;font-weight:400;">Start</div><svg style="position:absolute;left:1844px;top:689.50px" width="20" height="6" viewBox="0 0 20 6" fill="#7284ee"><circle cx="2.8" cy="3" r="1.6"/><circle cx="10" cy="3" r="1.6"/><circle cx="17.2" cy="3" r="1.6"/></svg><div style="position:absolute;left:287px;top:734.62px;width:1607px;height:2px;background:#f7f6fa"></div><div style="position:absolute;left:301px;top:766.62px;width:17px;height:17px;border:1px solid #eeedf1;border-radius:3px;background:#fff"></div><div style="position:absolute;left:348.5px;top:764.62px;width:26.5px;height:24.5px;border-radius:50%;background:linear-gradient(60deg,#1b2fec 15%,#3578f2 50%,#72eaf6 90%)"></div><div style="position:absolute;left:354.9px;top:771.02px;width:13px;height:12.8px;border-radius:50%;background:#fefefe"></div><div class="t" style="left:390.5px;top:754.74px;font-size:17px;line-height:20.4px;color:#3e3e42;font-weight:400;letter-spacing:0.25px">Telegram</div><div class="t" style="left:390.5px;top:781.03px;font-size:17px;line-height:20.4px;color:#3e3e42;font-weight:400;letter-spacing:0.4px">account (1)</div><div style="position:absolute;left:533px;top:777px;width:6px;height:1.6px;background:#6e6e72"></div><div class="t" style="left:888px;top:768.03px;font-size:17px;line-height:20.4px;color:#c8c8cc;font-weight:400;letter-spacing:0.15px">Enter note</div><div class="t" style="left:1056.5px;top:768.03px;font-size:17px;line-height:20.4px;color:#3e3e42;font-weight:400;">Local IP</div><div class="t" style="left:1298px;top:754.74px;font-size:17px;line-height:20.4px;color:#3e3e42;font-weight:400;letter-spacing:0.15px">a few seconds</div><div class="t" style="left:1298px;top:780.03px;font-size:17px;line-height:20.4px;color:#3e3e42;font-weight:400;">ago</div><div style="position:absolute;left:1461px;top:777px;width:6px;height:1.6px;background:#6e6e72"></div><div style="position:absolute;left:1620px;top:760.42px;width:65px;height:32.7px;border-radius:4px;background:#eaf4ec"></div><div class="t" style="left:1628px;top:767.03px;font-size:17px;line-height:20.4px;color:#5ba56c;font-weight:400;">Ready</div><div style="position:absolute;left:1761px;top:757.12px;width:70px;height:39.5px;border-radius:4px;background:#687df0"></div><div class="t" style="left:1777px;top:767.03px;font-size:17px;line-height:20.4px;color:#ffffff;font-weight:400;">Start</div><svg style="position:absolute;left:1844px;top:771.12px" width="20" height="6" viewBox="0 0 20 6" fill="#7284ee"><circle cx="2.8" cy="3" r="1.6"/><circle cx="10" cy="3" r="1.6"/><circle cx="17.2" cy="3" r="1.6"/></svg><div style="position:absolute;left:287px;top:816.25px;width:1607px;height:2px;background:#f7f6fa"></div><div style="position:absolute;left:301px;top:848.25px;width:17px;height:17px;border:1px solid #eeedf1;border-radius:3px;background:#fff"></div><div style="position:absolute;left:348.5px;top:846.25px;width:26.5px;height:24.5px;border-radius:50%;background:linear-gradient(60deg,#1b2fec 15%,#3578f2 50%,#72eaf6 90%)"></div><div style="position:absolute;left:354.9px;top:852.65px;width:13px;height:12.8px;border-radius:50%;background:#fefefe"></div><div class="t" style="left:390.5px;top:836.36px;font-size:17px;line-height:20.4px;color:#3e3e42;font-weight:400;letter-spacing:0.25px">Telegram</div><div class="t" style="left:390.5px;top:862.66px;font-size:17px;line-height:20.4px;color:#3e3e42;font-weight:400;letter-spacing:0.4px">account (8)</div><div style="position:absolute;left:533px;top:858px;width:6px;height:1.6px;background:#6e6e72"></div><div class="t" style="left:888px;top:849.66px;font-size:17px;line-height:20.4px;color:#c8c8cc;font-weight:400;letter-spacing:0.15px">Enter note</div><div class="t" style="left:1056.5px;top:849.66px;font-size:17px;line-height:20.4px;color:#3e3e42;font-weight:400;">Local IP</div><div class="t" style="left:1298px;top:836.36px;font-size:17px;line-height:20.4px;color:#3e3e42;font-weight:400;letter-spacing:0.15px">a few seconds</div><div class="t" style="left:1298px;top:861.66px;font-size:17px;line-height:20.4px;color:#3e3e42;font-weight:400;">ago</div><div style="position:absolute;left:1461px;top:858px;width:6px;height:1.6px;background:#6e6e72"></div><div style="position:absolute;left:1620px;top:842.05px;width:65px;height:32.7px;border-radius:4px;background:#eaf4ec"></div><div class="t" style="left:1628px;top:848.66px;font-size:17px;line-height:20.4px;color:#5ba56c;font-weight:400;">Ready</div><div style="position:absolute;left:1761px;top:838.75px;width:70px;height:39.5px;border-radius:4px;background:#687df0"></div><div class="t" style="left:1777px;top:848.66px;font-size:17px;line-height:20.4px;color:#ffffff;font-weight:400;">Start</div><svg style="position:absolute;left:1844px;top:852.75px" width="20" height="6" viewBox="0 0 20 6" fill="#7284ee"><circle cx="2.8" cy="3" r="1.6"/><circle cx="10" cy="3" r="1.6"/><circle cx="17.2" cy="3" r="1.6"/></svg><div style="position:absolute;left:287px;top:897.88px;width:1607px;height:2px;background:#f7f6fa"></div><div style="position:absolute;left:301px;top:929.88px;width:17px;height:17px;border:1px solid #eeedf1;border-radius:3px;background:#fff"></div><div style="position:absolute;left:348.5px;top:927.88px;width:26.5px;height:24.5px;border-radius:50%;background:linear-gradient(60deg,#1b2fec 15%,#3578f2 50%,#72eaf6 90%)"></div><div style="position:absolute;left:354.9px;top:934.27px;width:13px;height:12.8px;border-radius:50%;background:#fefefe"></div><div class="t" style="left:390.5px;top:917.99px;font-size:17px;line-height:20.4px;color:#3e3e42;font-weight:400;letter-spacing:0.25px">Telegram</div><div class="t" style="left:390.5px;top:944.29px;font-size:17px;line-height:20.4px;color:#3e3e42;font-weight:400;letter-spacing:0.4px">account (7)</div><div style="position:absolute;left:533px;top:940px;width:6px;height:1.6px;background:#6e6e72"></div><div class="t" style="left:888px;top:931.29px;font-size:17px;line-height:20.4px;color:#c8c8cc;font-weight:400;letter-spacing:0.15px">Enter note</div><div class="t" style="left:1056.5px;top:931.29px;font-size:17px;line-height:20.4px;color:#3e3e42;font-weight:400;">Local IP</div><div class="t" style="left:1298px;top:917.99px;font-size:17px;line-height:20.4px;color:#3e3e42;font-weight:400;letter-spacing:0.15px">a few seconds</div><div class="t" style="left:1298px;top:943.29px;font-size:17px;line-height:20.4px;color:#3e3e42;font-weight:400;">ago</div><div style="position:absolute;left:1461px;top:940px;width:6px;height:1.6px;background:#6e6e72"></div><div style="position:absolute;left:1620px;top:923.67px;width:65px;height:32.7px;border-radius:4px;background:#eaf4ec"></div><div class="t" style="left:1628px;top:930.29px;font-size:17px;line-height:20.4px;color:#5ba56c;font-weight:400;">Ready</div><div style="position:absolute;left:1761px;top:920.38px;width:70px;height:39.5px;border-radius:4px;background:#687df0"></div><div class="t" style="left:1777px;top:930.29px;font-size:17px;line-height:20.4px;color:#ffffff;font-weight:400;">Start</div><svg style="position:absolute;left:1844px;top:934.38px" width="20" height="6" viewBox="0 0 20 6" fill="#7284ee"><circle cx="2.8" cy="3" r="1.6"/><circle cx="10" cy="3" r="1.6"/><circle cx="17.2" cy="3" r="1.6"/></svg><div style="position:absolute;left:287px;top:979.50px;width:1607px;height:2px;background:#f7f6fa"></div><div style="position:absolute;left:301px;top:1011.5px;width:17px;height:17px;border:1px solid #eeedf1;border-radius:3px;background:#fff"></div><div style="position:absolute;left:348.5px;top:1009.50px;width:26.5px;height:24.5px;border-radius:50%;background:linear-gradient(60deg,#1b2fec 15%,#3578f2 50%,#72eaf6 90%)"></div><div style="position:absolute;left:354.9px;top:1015.90px;width:13px;height:12.8px;border-radius:50%;background:#fefefe"></div><div class="t" style="left:390.5px;top:999.61px;font-size:17px;line-height:20.4px;color:#3e3e42;font-weight:400;letter-spacing:0.25px">Telegram</div><div class="t" style="left:390.5px;top:1025.91px;font-size:17px;line-height:20.4px;color:#3e3e42;font-weight:400;letter-spacing:0.4px">account (3)</div><div style="position:absolute;left:533px;top:1022px;width:6px;height:1.6px;background:#6e6e72"></div><div class="t" style="left:888px;top:1012.91px;font-size:17px;line-height:20.4px;color:#c8c8cc;font-weight:400;letter-spacing:0.15px">Enter note</div><div class="t" style="left:1056.5px;top:1012.91px;font-size:17px;line-height:20.4px;color:#3e3e42;font-weight:400;">Local IP</div><div class="t" style="left:1298px;top:999.61px;font-size:17px;line-height:20.4px;color:#3e3e42;font-weight:400;letter-spacing:0.15px">a few seconds</div><div class="t" style="left:1298px;top:1024.91px;font-size:17px;line-height:20.4px;color:#3e3e42;font-weight:400;">ago</div><div style="position:absolute;left:1461px;top:1022px;width:6px;height:1.6px;background:#6e6e72"></div><div style="position:absolute;left:1620px;top:1005.30px;width:65px;height:32.7px;border-radius:4px;background:#eaf4ec"></div><div class="t" style="left:1628px;top:1011.91px;font-size:17px;line-height:20.4px;color:#5ba56c;font-weight:400;">Ready</div><div style="position:absolute;left:1761px;top:1002.00px;width:70px;height:39.5px;border-radius:4px;background:#687df0"></div><div class="t" style="left:1777px;top:1011.91px;font-size:17px;line-height:20.4px;color:#ffffff;font-weight:400;">Start</div><svg style="position:absolute;left:1844px;top:1016.00px" width="20" height="6" viewBox="0 0 20 6" fill="#7284ee"><circle cx="2.8" cy="3" r="1.6"/><circle cx="10" cy="3" r="1.6"/><circle cx="17.2" cy="3" r="1.6"/></svg></div><div style="position:absolute;left:286px;top:1035px;width:1609px;height:1.5px;background:#f6f5f8"></div><div style="position:absolute;left:0;top:1042px;width:1920px;height:46px;background:linear-gradient(180deg,rgba(30,30,40,0) 0%,rgba(30,30,40,0.035) 50%,rgba(30,30,40,0.1) 100%);pointer-events:none"></div><div class="t" style="left:1409px;top:1062.91px;font-size:17px;line-height:20.4px;color:#3a3a3e;font-weight:400;letter-spacing:0.2px">Profiles: 25</div><div style="position:absolute;left:1525px;top:1055px;width:30px;height:30px;border:1px solid #ebeaef;border-radius:3px;background:#fefefe"></div><svg style="position:absolute;left:1533px;top:1063px" width="16" height="16" viewBox="0 0 16 16" fill="none" stroke="#c8c8cc" stroke-width="1.5" stroke-linecap="round" stroke-linejoin="round"><path d="M10 3 5 8l5 5"/></svg><div style="position:absolute;left:1567px;top:1055px;width:30.5px;height:30px;border:1.2px solid #7a8cef;border-radius:3px;background:#fff"></div><div class="t" style="left:1578px;top:1062.91px;font-size:17px;line-height:20.4px;color:#6e82ee;font-weight:400;">1</div><div class="t" style="left:1620.5px;top:1062.91px;font-size:17px;line-height:20.4px;color:#3a3a3e;font-weight:400;">2</div><div class="t" style="left:1662.5px;top:1062.91px;font-size:17px;line-height:20.4px;color:#3a3a3e;font-weight:400;">3</div><div class="t" style="left:1705px;top:1062.91px;font-size:17px;line-height:20.4px;color:#3a3a3e;font-weight:400;">4</div><div style="position:absolute;left:1736px;top:1055px;width:30px;height:30px;border:1px solid #ebeaef;border-radius:3px;background:#fefefe"></div><svg style="position:absolute;left:1744px;top:1063px" width="16" height="16" viewBox="0 0 16 16" fill="none" stroke="#3a3a3e" stroke-width="1.5" stroke-linecap="round" stroke-linejoin="round"><path d="M6 3l5 5-5 5"/></svg><div style="position:absolute;left:1778px;top:1055px;width:116px;height:30px;border:1px solid #ebeaef;border-radius:3px;background:#fefefe"></div><div class="t" style="left:1792px;top:1062.91px;font-size:17px;line-height:20.4px;color:#3a3a3e;font-weight:400;letter-spacing:0.3px">25 / page</div><svg style="position:absolute;left:1870px;top:1065px" width="14" height="10" viewBox="0 0 14 10" fill="none" stroke="#c4c4c8" stroke-width="1.3" stroke-linecap="round" stroke-linejoin="round"><path d="M2 2.5l5 5 5-5"/></svg><svg style="position:absolute;left:1815px;top:980px" width="80" height="80" viewBox="0 0 1092 1092" fill="#fff" stroke="#3f78be" stroke-width="30" stroke-linejoin="round" stroke-linecap="round">
<path d="M400 120 H930 Q1000 120 1000 200 V540 Q1000 620 920 620 H895 V805 L800 680 V380 Q800 295 715 295 H340 V200 Q340 120 400 120 Z"/>
<path d="M215 295 H715 Q785 295 785 375 V720 Q785 800 705 800 H460 L310 985 V800 H210 Q135 800 135 720 V375 Q135 295 215 295 Z"/>
<path d="M262 462 H468M262 558 H660M262 655 H660" fill="none"/>
<path d="M415 550 Q440 505 465 550M510 550 Q535 505 560 550M605 550 Q630 505 655 550" fill="none" stroke-width="26"/>
</svg><div style="position:absolute;left:0;top:1088px;width:1920px;height:4px;background:linear-gradient(90deg,#0c0c0c 0,#0c0c0c 62px,#6a6a6a 62px,#6a6a6a 1703px,#101010 1703px)"></div><div style="position:absolute;left:0;top:1076px;width:10px;height:12px;background:radial-gradient(circle at 12px 0,transparent 11px,#0c0c0c 12px)"></div><div style="position:absolute;left:1912px;top:1082px;width:8px;height:6px;background:radial-gradient(circle at 0 -4px,transparent 9px,#101010 10px)"></div>
</div>
</body></html>
